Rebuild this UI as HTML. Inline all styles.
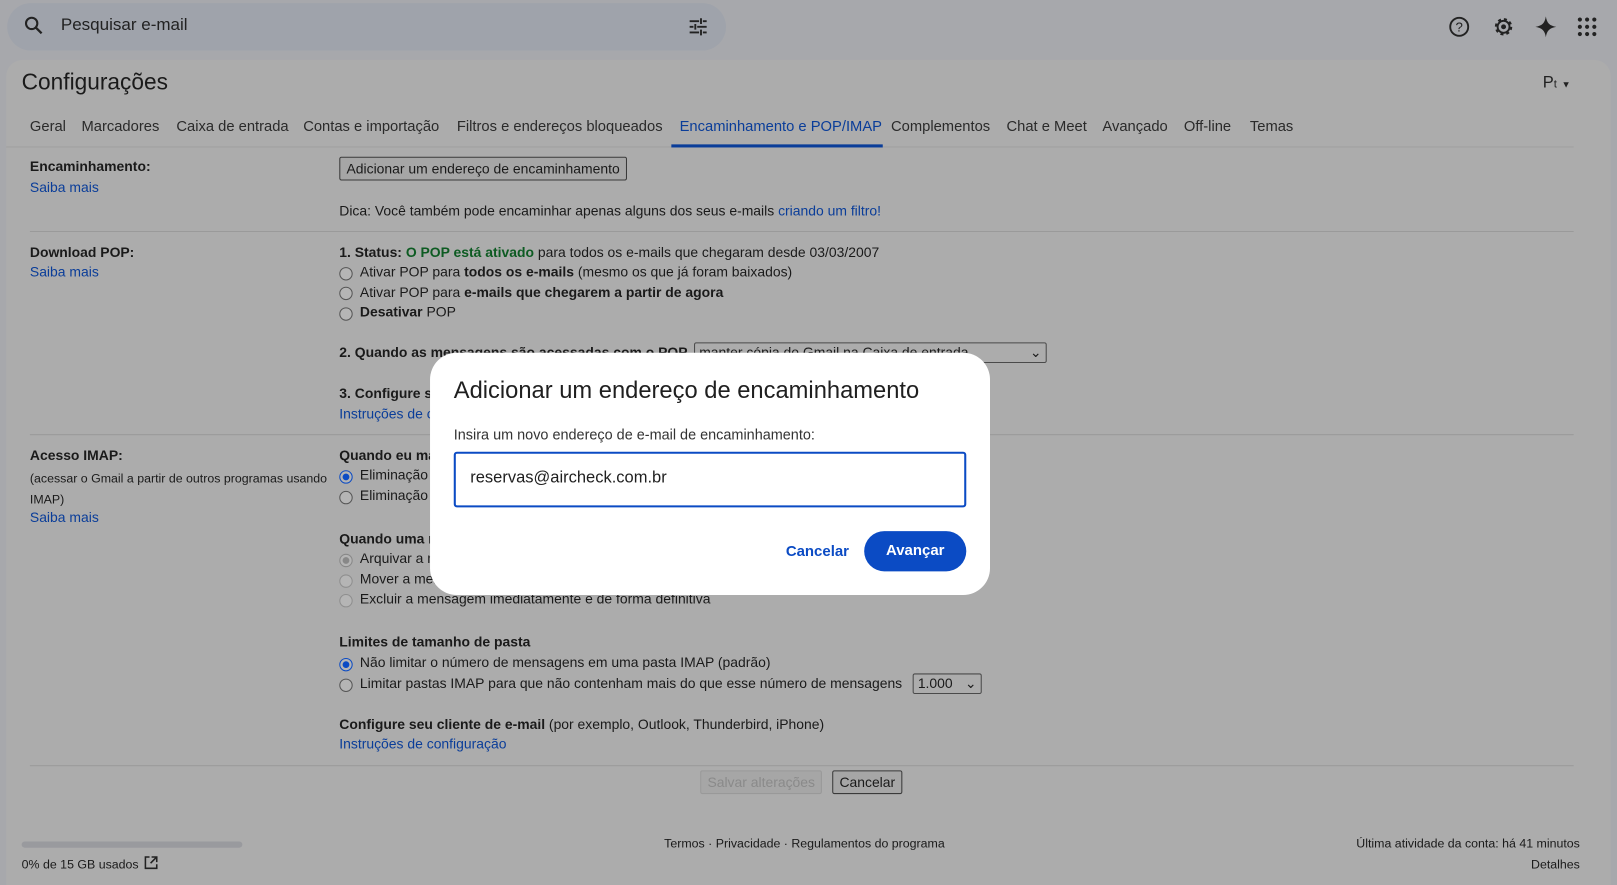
<!DOCTYPE html>
<html><head><meta charset="utf-8"><style>
*{box-sizing:border-box;margin:0;padding:0}
html,body{width:1617px;height:882px;overflow:hidden;background:#a7a8ac;font-family:"Liberation Sans",sans-serif;color:#1a1a1a}
#w{position:absolute;left:0;top:0;width:1568px;height:855px;transform:scale(1.03125);transform-origin:0 0}
.a{position:absolute;white-space:nowrap}
.s{font-size:13.5px}
.lk{color:#0a3d99}
b{font-weight:bold}
.rad{position:absolute;width:13px;height:13px;border:1px solid #555;border-radius:50%;background:#b5b5b5}
.rad.on{border:1.5px solid #0b4bc4;background:radial-gradient(#0b4bc4 3px,#b5b5b5 3.5px)}
.rad.dis{border-color:#8e8e8e}
.btn{position:absolute;border:1px solid #3a3a3a;background:#a6a6a6;font-size:13.5px;padding:0 6px;height:23px;line-height:21px;border-radius:2px}
.sel{position:absolute;border:1px solid #4a4a4a;background:#acacac;font-size:13.5px;height:20px;line-height:18px;padding-left:4px;border-radius:2px}
.hr{position:absolute;height:1px;background:#9a9a9a}
</style></head><body><div id="w">
<div class="a" style="left:7px;top:3px;width:697px;height:46px;border-radius:23px;background:#9fa3ab"></div>
<svg class="a" style="left:22px;top:14px" width="22" height="22" viewBox="0 0 24 24"><circle cx="9.5" cy="9.5" r="6" fill="none" stroke="#222" stroke-width="2.2"/><path d="M14 14l6 6" stroke="#222" stroke-width="2.4"/></svg>
<div class="a" style="left:59px;top:15px;font-size:16.5px;color:#222">Pesquisar e-mail</div>
<svg class="a" style="left:666px;top:15px" width="22" height="22" viewBox="0 0 24 24" stroke="#222" stroke-width="2"><path d="M3 6h10M17 6h4M15 3v6M3 12h4M11 12h10M9 9v6M3 18h10M17 18h4M15 15v6"/></svg>
<svg class="a" style="left:1404px;top:15px" width="22" height="22" viewBox="0 0 24 24"><circle cx="12" cy="12" r="9.5" fill="none" stroke="#222" stroke-width="2"/><text x="12" y="17" font-size="14" text-anchor="middle" font-family="Liberation Sans" fill="#222">?</text></svg>
<svg class="a" style="left:1447px;top:15px" width="22" height="22" viewBox="0 0 24 24"><circle cx="12" cy="12" r="8" fill="none" stroke="#222" stroke-width="2.4" stroke-dasharray="3.2 3.1"/><circle cx="12" cy="12" r="6.3" fill="none" stroke="#222" stroke-width="2"/><circle cx="12" cy="12" r="2.6" fill="#222"/></svg>
<svg class="a" style="left:1488px;top:15px" width="22" height="22" viewBox="0 0 24 24"><path d="M12 1C13 8 16 11 23 12C16 13 13 16 12 23C11 16 8 13 1 12C8 11 11 8 12 1Z" fill="#222"/></svg>
<svg class="a" style="left:1529px;top:16px" width="20" height="20" viewBox="0 0 20 20" fill="#222"><circle cx="3" cy="3" r="2"/><circle cx="10" cy="3" r="2"/><circle cx="17" cy="3" r="2"/><circle cx="3" cy="10" r="2"/><circle cx="10" cy="10" r="2"/><circle cx="17" cy="10" r="2"/><circle cx="3" cy="17" r="2"/><circle cx="10" cy="17" r="2"/><circle cx="17" cy="17" r="2"/></svg>
<div class="a" style="left:6px;top:58px;width:1556px;height:800px;border-radius:16px 16px 0 0;background:#acacac"></div>
<div class="a" style="left:21px;top:67px;font-size:22px;color:#1a1a1a">Configurações</div>
<div class="a" style="left:1496px;top:72px;font-size:16px;color:#222">P<span style="font-size:11px">t</span> <span style="font-size:9px">▼</span></div>
<div class="a s" style="top:115px;left:29px;font-size:14.3px;color:#2a2a2a;word-spacing:0">
<span style="position:absolute;left:0">Geral</span><span style="position:absolute;left:50px">Marcadores</span><span style="position:absolute;left:142px">Caixa de entrada</span><span style="position:absolute;left:265px">Contas e importação</span><span style="position:absolute;left:414px">Filtros e endereços bloqueados</span><span style="position:absolute;left:630px;color:#0a3d99">Encaminhamento e POP/IMAP</span><span style="position:absolute;left:835px">Complementos</span><span style="position:absolute;left:947px">Chat e Meet</span><span style="position:absolute;left:1040px">Avançado</span><span style="position:absolute;left:1119px">Off-line</span><span style="position:absolute;left:1183px">Temas</span></div>
<div class="hr" style="left:6px;top:142px;width:1520px;background:#a0a0a0"></div>
<div class="a" style="left:651px;top:140px;width:205px;height:3px;background:#0a3d99"></div>
<div class="a s" style="left:29px;top:154px"><b>Encaminhamento:</b></div>
<div class="a s lk" style="left:29px;top:174px">Saiba mais</div>
<div class="btn" style="left:329px;top:152px">Adicionar um endereço de encaminhamento</div>
<div class="a s" style="left:329px;top:197px">Dica: Você também pode encaminhar apenas alguns dos seus e-mails <span class="lk">criando um filtro!</span></div>
<div class="hr" style="left:29px;top:224px;width:1497px"></div>
<div class="a s" style="left:29px;top:237px"><b>Download POP:</b></div>
<div class="a s lk" style="left:29px;top:256px">Saiba mais</div>
<div class="a s" style="left:329px;top:237px"><b>1. Status: <span style="color:#0d5b22">O POP está ativado</span></b> para todos os e-mails que chegaram desde 03/03/2007</div>
<div class="rad" style="left:329px;top:259px"></div><div class="a s" style="left:349px;top:256px">Ativar POP para <b>todos os e-mails</b> (mesmo os que já foram baixados)</div>
<div class="rad" style="left:329px;top:278px"></div><div class="a s" style="left:349px;top:276px">Ativar POP para <b>e-mails que chegarem a partir de agora</b></div>
<div class="rad" style="left:329px;top:298px"></div><div class="a s" style="left:349px;top:295px"><b>Desativar</b> POP</div>
<div class="a s" style="left:329px;top:334px"><b>2. Quando as mensagens são acessadas com o POP</b></div>
<div class="sel" style="left:673px;top:332px;width:342px">manter cópia do Gmail na Caixa de entrada <span style="position:absolute;right:4px">⌄</span></div>
<div class="a s" style="left:329px;top:374px"><b>3. Configure seu cliente de e-mail</b></div>
<div class="a s lk" style="left:329px;top:394px">Instruções de configuração</div>
<div class="hr" style="left:29px;top:421px;width:1497px"></div>
<div class="a s" style="left:29px;top:434px"><b>Acesso IMAP:</b></div>
<div class="a" style="left:29px;top:454px;font-size:12px;line-height:20px">(acessar o Gmail a partir de outros programas usando<br>IMAP)</div>
<div class="a s lk" style="left:29px;top:494px">Saiba mais</div>
<div class="a s" style="left:329px;top:434px"><b>Quando eu marcar uma mensagem como excluída no IMAP:</b></div>
<div class="rad on" style="left:329px;top:456px"></div><div class="a s" style="left:349px;top:453px">Eliminação automática ativada</div>
<div class="rad" style="left:329px;top:476px"></div><div class="a s" style="left:349px;top:473px">Eliminação automática desativada</div>
<div class="a s" style="left:329px;top:515px"><b>Quando uma mensagem for marcada como excluída e eliminada da última pasta IMAP visível:</b></div>
<div class="rad on" style="left:329px;top:537px;border-color:#888;background:radial-gradient(#888 3px,#b5b5b5 3.5px)"></div><div class="a s" style="left:349px;top:534px">Arquivar a mensagem</div>
<div class="rad dis" style="left:329px;top:557px"></div><div class="a s" style="left:349px;top:554px">Mover a mensagem para a lixeira</div>
<div class="rad dis" style="left:329px;top:576px"></div><div class="a s" style="left:349px;top:573px">Excluir a mensagem imediatamente e de forma definitiva</div>
<div class="a s" style="left:329px;top:615px"><b>Limites de tamanho de pasta</b></div>
<div class="rad on" style="left:329px;top:638px"></div><div class="a s" style="left:349px;top:635px">Não limitar o número de mensagens em uma pasta IMAP (padrão)</div>
<div class="rad" style="left:329px;top:658px"></div><div class="a s" style="left:349px;top:655px">Limitar pastas IMAP para que não contenham mais do que esse número de mensagens</div>
<div class="sel" style="left:885px;top:653px;width:67px">1.000 <span style="position:absolute;right:4px">⌄</span></div>
<div class="a s" style="left:329px;top:695px"><b>Configure seu cliente de e-mail</b> (por exemplo, Outlook, Thunderbird, iPhone)</div>
<div class="a s lk" style="left:329px;top:714px">Instruções de configuração</div>
<div class="hr" style="left:29px;top:742px;width:1497px"></div>
<div class="btn" style="left:679px;top:747px;color:#8a8a8a;border-color:#999">Salvar alterações</div>
<div class="btn" style="left:807px;top:747px">Cancelar</div>
<div class="a" style="left:21px;top:816px;width:214px;height:6px;border-radius:3px;background:#999a9e"></div>
<div class="a" style="left:21px;top:831px;font-size:12px">0% de 15 GB usados</div>
<svg class="a" style="left:139px;top:829px" width="15" height="15" viewBox="0 0 15 15" fill="none" stroke="#222" stroke-width="1.5"><path d="M6 2H2v11h11V9M8 2h5v5M13 2L7 8"/></svg>
<div class="a" style="left:644px;top:811px;font-size:12px">Termos · Privacidade · Regulamentos do programa</div>
<div class="a" style="right:36px;top:811px;font-size:12px">Última atividade da conta: há 41 minutos</div>
<div class="a" style="right:36px;top:831px;font-size:12px">Detalhes</div>
<div class="a" style="left:417px;top:342px;width:543px;height:235px;background:#fff;border-radius:26px"></div>
<div class="a" style="left:440px;top:365px;font-size:23px;color:#1f1f1f">Adicionar um endereço de encaminhamento</div>
<div class="a" style="left:440px;top:413px;font-size:14px;color:#333">Insira um novo endereço de e-mail de encaminhamento:</div>
<div class="a" style="left:440px;top:438px;width:497px;height:54px;border:2.5px solid #0b4bc4;border-radius:3px"></div>
<div class="a" style="left:456px;top:455px;font-size:16px;color:#1f1f1f">reservas@aircheck.com.br</div>
<div class="a" style="left:762px;top:527px;font-size:14.5px;font-weight:bold;color:#0b4bc4">Cancelar</div>
<div class="a" style="left:838px;top:515px;width:99px;height:39px;border-radius:20px;background:#0b4bc4;color:#fff;font-size:14.5px;font-weight:bold;text-align:center;line-height:39px">Avançar</div>
</div></body></html>
